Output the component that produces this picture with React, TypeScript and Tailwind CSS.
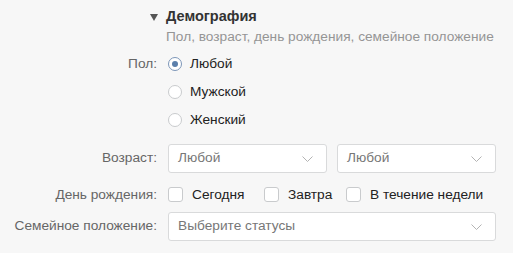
import React from "react";

function Chevron() {
  return (
    <svg width="11" height="6" viewBox="0 0 11 6" fill="none" className="shrink-0">
      <path d="M0.5 0.5 L5.5 5.5 L10.5 0.5" stroke="#b3b3b3" strokeWidth="1" />
    </svg>
  );
}

function Select({ text, className }: { text: string; className: string }) {
  return (
    <div
      className={
        "h-[29px] bg-white border border-[#d9dadb] rounded-[3px] flex items-center justify-between pl-[9px] pr-[13px] " +
        className
      }
    >
      <span className="text-[#777] text-[13.7px]">{text}</span>
      <Chevron />
    </div>
  );
}

function Radio({ checked, label }: { checked?: boolean; label: string }) {
  return (
    <div className="h-[28px] flex items-center">
      <div
        className={
          "w-[14px] h-[14px] rounded-full bg-white border flex items-center justify-center " +
          (checked ? "border-[#7d96b8]" : "border-[#c9cbcd]")
        }
      >
        {checked && <div className="w-[6px] h-[6px] rounded-full bg-[#5b7fab]" />}
      </div>
      <span className="ml-[8px] text-[#222] text-[13.7px]">{label}</span>
    </div>
  );
}

function Check({ label, className }: { label: string; className?: string }) {
  return (
    <div className={"flex items-center " + (className || "")}>
      <div className="w-[15px] h-[15px] bg-white border border-[#c9cbcd] rounded-[3px]" />
      <span className="ml-[9px] text-[#222] text-[13.7px]">{label}</span>
    </div>
  );
}

function Label({ text }: { text: string }) {
  return <div className="w-[157px] shrink-0 text-right text-[#666] text-[13.7px]">{text}</div>;
}

export default function App() {
  return (
    <div className="w-[513px] h-[253px] bg-[#f7f7f7] overflow-hidden font-['Helvetica_Neue','Liberation_Sans',Arial,sans-serif]">
      <div className="pl-[150px] pt-[8px]">
        <div className="h-[18px] flex items-center">
          <svg width="8" height="7" viewBox="0 0 8 7" className="shrink-0 mr-[8px]">
            <path d="M0 0 H8 L4 7 Z" fill="#555" />
          </svg>
          <span className="text-[14.5px] font-bold text-[#333]">Демография</span>
        </div>
        <div className="h-[18px] mt-[2px] pl-[16px] flex items-center text-[13.7px] text-[#959595] whitespace-nowrap">
          Пол, возраст, день рождения, семейное положение
        </div>
      </div>

      <div className="mt-[4px] flex">
        <div className="w-[157px] shrink-0 h-[28px] flex items-center justify-end text-[#666] text-[13.7px]">
          Пол:
        </div>
        <div className="ml-[11px] flex flex-col">
          <Radio checked label="Любой" />
          <Radio label="Мужской" />
          <Radio label="Женский" />
        </div>
      </div>

      <div className="mt-[10px] flex items-center">
        <Label text="Возраст:" />
        <div className="ml-[11px] flex gap-[10px]">
          <Select text="Любой" className="w-[159px]" />
          <Select text="Любой" className="w-[159px]" />
        </div>
      </div>

      <div className="mt-[8px] h-[28px] flex items-center">
        <Label text="День рождения:" />
        <div className="ml-[11px] flex items-center">
          <Check label="Сегодня" className="w-[96px]" />
          <Check label="Завтра" className="w-[82px]" />
          <Check label="В течение недели" />
        </div>
      </div>

      <div className="mt-[3px] flex items-center">
        <Label text="Семейное положение:" />
        <div className="ml-[11px]">
          <Select text="Выберите статусы" className="w-[328px]" />
        </div>
      </div>
    </div>
  );
}
